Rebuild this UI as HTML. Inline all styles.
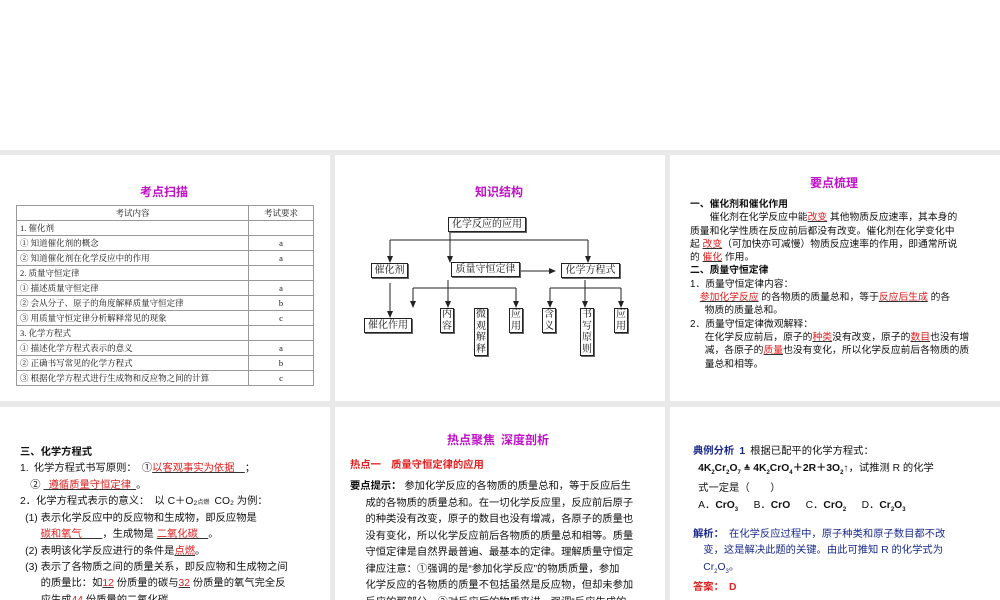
<!DOCTYPE html>
<html><head><meta charset="utf-8"><style>
body{margin:0;width:1000px;height:600px;background:#e9e9e9;position:relative;overflow:hidden;font-family:"Liberation Serif","Noto Serif CJK SC","Noto Sans CJK SC",serif;color:#111}
.p{position:absolute;background:#fff;overflow:hidden}
.a{position:absolute;white-space:nowrap}
.t{font-family:"Liberation Sans","Noto Sans CJK SC",sans-serif;font-weight:bold;color:#c010c8;font-size:12px}
.s{font-family:"Liberation Sans","Noto Sans CJK SC",sans-serif}
.r{color:#e02020;text-decoration:underline;text-decoration-color:#333}
.b{font-weight:bold}
table{border-collapse:collapse;font-size:8.5px}
td{border:1px solid #999;height:14px;padding:0 3px;line-height:13px}
.box{position:absolute;border:1px solid #222;box-shadow:1px 1px 0 #666;font-size:10px;line-height:13px;text-align:center;background:#fff}
.v{width:12px;white-space:normal;line-height:11.5px}
sub{font-size:6px}
</style></head><body>
<div class="p" style="left:0;top:0;width:1000px;height:150px"></div>

<div class="p" style="left:0;top:155px;width:330px;height:246px">
<div class="a t" style="left:140px;top:28px">考点扫描</div>
<table style="position:absolute;left:16px;top:50px;width:298px">
<tr><td style="text-align:center;width:225px">考试内容</td><td style="text-align:center">考试要求</td></tr>
<tr><td>1. 催化剂</td><td></td></tr>
<tr><td>① 知道催化剂的概念</td><td style="text-align:center">a</td></tr>
<tr><td>② 知道催化剂在化学反应中的作用</td><td style="text-align:center">a</td></tr>
<tr><td>2. 质量守恒定律</td><td></td></tr>
<tr><td>① 描述质量守恒定律</td><td style="text-align:center">a</td></tr>
<tr><td>② 会从分子、原子的角度解释质量守恒定律</td><td style="text-align:center">b</td></tr>
<tr><td>③ 用质量守恒定律分析解释常见的现象</td><td style="text-align:center">c</td></tr>
<tr><td>3. 化学方程式</td><td></td></tr>
<tr><td>① 描述化学方程式表示的意义</td><td style="text-align:center">a</td></tr>
<tr><td>② 正确书写常见的化学方程式</td><td style="text-align:center">b</td></tr>
<tr><td>③ 根据化学方程式进行生成物和反应物之间的计算</td><td style="text-align:center">c</td></tr>
</table>
</div>

<div class="p" style="left:335px;top:155px;width:330px;height:246px">
<div class="a t" style="left:140px;top:28px">知识结构</div>
<svg style="position:absolute;left:0;top:0" width="330" height="246" stroke="#222" fill="#222">
<line x1="115" y1="77" x2="115" y2="103"/>
<line x1="55" y1="85" x2="253" y2="85"/>
<line x1="55" y1="85" x2="55" y2="103"/><polygon points="52,101 58,101 55,108" stroke="none"/>
<polygon points="112,101 118,101 115,108" stroke="none"/>
<line x1="253" y1="85" x2="253" y2="103"/><polygon points="250,101 256,101 253,108" stroke="none"/>
<line x1="184" y1="116" x2="216" y2="116"/><polygon points="214,113 214,119 221,116" stroke="none"/>
<line x1="55" y1="128" x2="55" y2="158"/><polygon points="52,156 58,156 55,163" stroke="none"/>
<line x1="113" y1="125" x2="113" y2="148"/><polygon points="110,146 116,146 113,153" stroke="none"/>
<line x1="78" y1="133" x2="181" y2="133"/>
<line x1="78" y1="133" x2="78" y2="148"/><polygon points="75,146 81,146 78,153" stroke="none"/>
<line x1="181" y1="133" x2="181" y2="148"/><polygon points="178,146 184,146 181,153" stroke="none"/>
<line x1="250" y1="125" x2="250" y2="148"/><polygon points="247,146 253,146 250,153" stroke="none"/>
<line x1="215" y1="133" x2="286" y2="133"/>
<line x1="215" y1="133" x2="215" y2="148"/><polygon points="212,146 218,146 215,153" stroke="none"/>
<line x1="286" y1="133" x2="286" y2="148"/><polygon points="283,146 289,146 286,153" stroke="none"/>
</svg>
<div class="box" style="left:113px;top:62px;width:76px">化学反应的应用</div>
<div class="box" style="left:36px;top:108px;width:35px">催化剂</div>
<div class="box" style="left:116px;top:107px;width:67px">质量守恒定律</div>
<div class="box" style="left:226px;top:108px;width:57px">化学方程式</div>
<div class="box" style="left:29px;top:163px;width:46px">催化作用</div>
<div class="box v" style="left:105px;top:153px">内容</div>
<div class="box v" style="left:139px;top:153px">微观解释</div>
<div class="box v" style="left:174px;top:153px">应用</div>
<div class="box v" style="left:207px;top:153px">含义</div>
<div class="box v" style="left:245px;top:153px">书写原则</div>
<div class="box v" style="left:279px;top:153px">应用</div>
</div>

<div class="p s" style="left:670px;top:155px;width:330px;height:246px;font-size:9.8px;line-height:13.3px">
<div class="a t" style="left:140px;top:22px">要点梳理</div>
<div class="a" style="left:20px;top:43px">
<span class="b">一、催化剂和催化作用</span><br>
&emsp;&emsp;催化剂在化学反应中能<span class="r">改变</span> 其他物质反应速率，其本身的<br>
质量和化学性质在反应前后都没有改变。催化剂在化学变化中<br>
起 <span class="r">改变</span>（可加快亦可减慢）物质反应速率的作用，即通常所说<br>
的 <span class="r">催化</span> 作用。<br>
<span class="b">二、质量守恒定律</span><br>
1．质量守恒定律内容：<br>
&emsp;<span class="r">参加化学反应</span> 的各物质的质量总和，等于<span class="r">反应后生成</span> 的各<br>
&emsp;&ensp;物质的质量总和。<br>
2．质量守恒定律微观解释：<br>
&emsp;&ensp;在化学反应前后，原子的<span class="r">种类</span>没有改变，原子的<span class="r">数目</span>也没有增<br>
&emsp;&ensp;减，各原子的<span class="r">质量</span>也没有变化，所以化学反应前后各物质的质<br>
&emsp;&ensp;量总和相等。</div>
</div>

<div class="p s" style="left:0;top:407px;width:330px;height:193px;font-size:10.3px">
<div class="a" style="left:20px;top:38px;line-height:16.3px">
<span class="b">三、化学方程式</span><br>
1.&ensp;化学方程式书写原则：&ensp;①<span class="r">以客观事实为依据&emsp;</span>；<br>
&emsp;② <span class="r">&ensp;遵循质量守恒定律&ensp;</span>。<br>
2．化学方程式表示的意义：&ensp;以 C＋O₂<span style="font-size:6px">点燃</span>&ensp;CO₂ 为例：<br>
&ensp;(1) 表示化学反应中的反应物和生成物，即反应物是<br>
&emsp;&emsp;<span class="r">碳和氧气&emsp;&emsp;</span>，生成物是 <span class="r">二氧化碳&emsp;</span>。<br>
&ensp;(2) 表明该化学反应进行的条件是<span class="r">点燃</span>。<br>
&ensp;(3) 表示了各物质之间的质量关系，即反应物和生成物之间<br>
&emsp;&emsp;的质量比：如<span class="r">12</span> 份质量的碳与<span class="r">32</span> 份质量的氧气完全反<br>
&emsp;&emsp;应生成<span class="r">44</span> 份质量的二氧化碳。</div>
</div>

<div class="p s" style="left:335px;top:407px;width:330px;height:193px;font-size:10.3px">
<div class="a t" style="left:112px;top:24px">热点聚焦&ensp;深度剖析</div>
<div class="a b" style="left:15px;top:49px;color:#e02020">热点一&emsp;质量守恒定律的应用</div>
<div class="a" style="left:15px;top:72px;line-height:16.5px"><b>要点提示：</b> 参加化学反应的各物质的质量总和，等于反应后生<br>
&emsp;&ensp;成的各物质的质量总和。在一切化学反应里，反应前后原子<br>
&emsp;&ensp;的种类没有改变，原子的数目也没有增减，各原子的质量也<br>
&emsp;&ensp;没有变化，所以化学反应前后各物质的质量总和相等。质量<br>
&emsp;&ensp;守恒定律是自然界最普遍、最基本的定律。理解质量守恒定<br>
&emsp;&ensp;律应注意：①强调的是“参加化学反应”的物质质量，参加<br>
&emsp;&ensp;化学反应的各物质的质量不包括虽然是反应物，但却未参加<br>
&emsp;&ensp;反应的那部分。②对反应后的物质来讲，强调“反应生成的</div>
</div>

<div class="p s" style="left:670px;top:407px;width:330px;height:193px;font-size:10.3px">
<div class="a" style="left:23px;top:37px;line-height:16.5px"><b style="color:#1a2a8a">典例分析&ensp;1</b>&ensp;根据已配平的化学方程式：<br>
&ensp;<b>4K<sub>2</sub>Cr<sub>2</sub>O<sub>7</sub> <span style="font-size:8px">≜</span> 4K<sub>2</sub>CrO<sub>4</sub>＋2R＋3O<sub>2</sub>↑</b>，试推测 R 的化学<br>
&ensp;式一定是（&emsp;&emsp;）<br>
&ensp;A．<b>CrO<sub>3</sub></b>&emsp;&ensp;B．<b>CrO</b>&emsp;&ensp;C．<b>CrO<sub>2</sub></b>&emsp;&ensp;D．<b>Cr<sub>2</sub>O<sub>3</sub></b></div>
<div class="a" style="left:23px;top:120px;line-height:16.3px;color:#1a2a8a"><b>解析：</b>&ensp;在化学反应过程中，原子种类和原子数目都不改<br>
&ensp;&ensp;变，这是解决此题的关键。由此可推知 R 的化学式为<br>
&ensp;&ensp;Cr<sub>2</sub>O<sub>3</sub>。<br>
<b style="color:#e02020">答案：&ensp;D</b></div>
</div>
</body></html>
